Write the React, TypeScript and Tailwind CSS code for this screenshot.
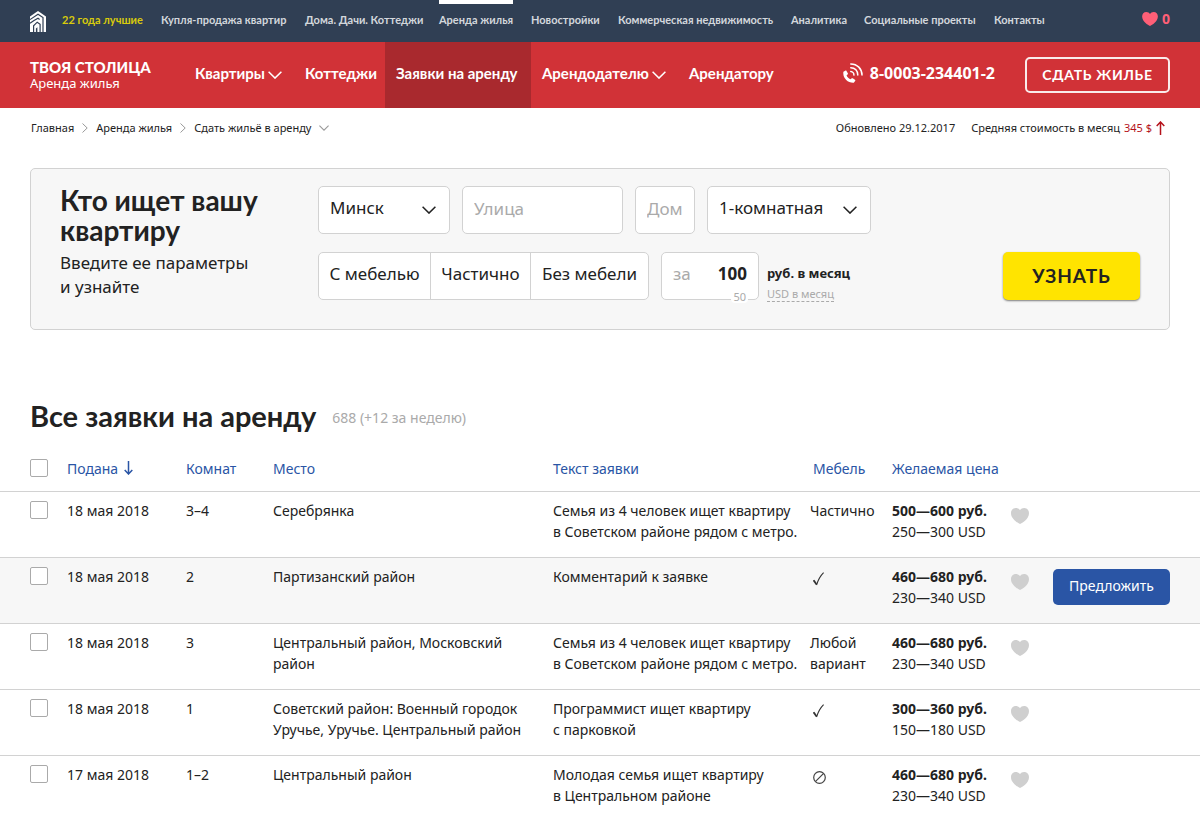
import { useState } from "react";
import type { ReactNode } from "react";

// ==========================================
// Icons
// ==========================================
function LogoIcon() {
  return (
    <svg viewBox="0 0 16 21" className="h-[21px] w-4" aria-hidden="true">
      <path d="M0 5.600 8 0l8 5.600V21H0z" fill="#fff" />
      <g fill="none" stroke="#303f54" strokeWidth="1.200">
        <path d="M0 8.600 8 3.200l5 3.400V21" />
        <path d="M0 12.200l4-2.700 4-2.300 1.600 1.200" />
        <path d="M3.600 21v-6.200L7.200 11.200l2.900 2V21" />
      </g>
      <path d="M5.900 17.500l1.500-1.200V21H5.900z" fill="#303f54" />
    </svg>
  );
}

function HeartIcon({ className }: { className: string }) {
  return (
    <svg viewBox="0 0 18 16" className={className} fill="currentColor" aria-hidden="true">
      <path d="M9 16C6.800 14.900 0 11 0 5.200 0 2.200 2 0 4.800 0 6.700 0 8.200.9 9 2.200 9.800.9 11.300 0 13.200 0 16 0 18 2.200 18 5.200 18 11 11.200 14.900 9 16z" />
    </svg>
  );
}

function Chevron({ className }: { className: string }) {
  return (
    <svg viewBox="0 0 14 8" className={`shrink-0 ${className}`} fill="none" stroke="currentColor" strokeWidth="1.500" aria-hidden="true">
      <path d="M.6.7 7 7.100 13.400.7" />
    </svg>
  );
}

function CrumbArrow() {
  return (
    <svg viewBox="0 0 6 10" className="h-2.5 w-1.5" fill="none" stroke="#999" aria-hidden="true">
      <path d="M.5.5 5.200 5 .5 9.500" />
    </svg>
  );
}

function PhoneIcon() {
  return (
    <svg viewBox="0 0 20 20" className="size-5" fill="none" stroke="#fff" strokeWidth="1.500" strokeLinecap="round" aria-hidden="true">
      <path
        d="M.4 8.800 2.200 7.700c.5-.3 1-.2 1.300.3l1.300 2.200c.3.500.2 1-.3 1.400l-.9.600c.6 2 2.200 3.500 4.200 4.100l.6-.8c.4-.4.900-.5 1.400-.2l2.100 1.400c.5.400.6.900.2 1.400l-1.300 1.600C5 20.200-.6 15 .4 8.800z"
        fill="#fff"
        stroke="none"
      />
      <path d="M7.800 8.600c1.900.1 3.200 1.600 3.100 3.500" />
      <path d="M7.800 4.700c4.200 0 7.100 3.100 7 7.400" />
      <path d="M7.800.9c6.400 0 11.200 4.900 11.200 11.200" />
    </svg>
  );
}

function ArrowIcon({ up, className }: { up?: boolean; className: string }) {
  return (
    <svg viewBox="0 0 9 14" className={className} fill="none" stroke="currentColor" strokeWidth="1.500" aria-hidden="true">
      <path d={up ? "M4.500 14V1M.7 5 4.500 1l3.800 4" : "M4.500 0v13M.7 9l3.800 4 3.800-4"} />
    </svg>
  );
}

function CheckIcon() {
  return (
    <svg viewBox="0 0 11 14" className="mt-1.5 ml-[3px] h-3.5 w-[11px]" fill="none" stroke="#333" role="img" aria-label="Есть">
      <path d="M.6 8.200 3.600 12.600" strokeWidth="1.800" />
      <path d="M3.500 13C5 8.500 7.200 4 10.600.7" strokeWidth="1.100" />
    </svg>
  );
}

function NoneIcon() {
  return (
    <svg viewBox="0 0 13 13" className="mt-[7px] ml-[3px] size-[13px]" fill="none" stroke="#444" strokeWidth="1.200" role="img" aria-label="Нет">
      <circle cx="6.500" cy="6.500" r="5.800" />
      <path d="m2.600 10.400 7.800-7.800" />
    </svg>
  );
}

// ==========================================
// Header
// ==========================================
const topLinks = [
  "22 года лучшие",
  "Купля-продажа квартир",
  "Дома. Дачи. Коттеджи",
  "Аренда жилья",
  "Новостройки",
  "Коммерческая недвижимость",
  "Аналитика",
  "Социальные проекты",
  "Контакты",
];

function TopBar() {
  return (
    <div className="flex h-[42px] items-center bg-[#303f54] px-[30px] text-[#d3d7dc]">
      <a href="#" aria-label="Твоя столица" className="w-8 shrink-0">
        <LogoIcon />
      </a>
      <nav className="grid h-full grid-cols-[99px_144px_134px_92px_87px_173px_73px_130px_auto] font-['Lato',sans-serif] text-[11px] leading-10 font-bold whitespace-nowrap">
        {topLinks.map((label, i) => (
          <a key={label} href="#" className={`justify-self-start ${i === 0 ? "text-[#d9cb0b]" : ""} ${i === 3 ? "border-t-4 border-white leading-8" : ""}`}>
            {label}
          </a>
        ))}
      </nav>
      <a href="#" className="ml-auto flex items-center gap-1 pb-1 text-sm font-bold text-[#ff5f77]">
        <HeartIcon className="h-3.5 w-4" />0
      </a>
    </div>
  );
}

const mainLinks = [
  { label: "Квартиры", more: true },
  { label: "Коттеджи" },
  { label: "Заявки на аренду", active: true },
  { label: "Арендодателю", more: true },
  { label: "Арендатору" },
];

function MainBar() {
  return (
    <div className="flex h-[66px] items-center bg-[#d13237] px-[30px] text-white">
      <a href="#" className="w-[154px] shrink-0">
        <span className="block font-['Lato',sans-serif] text-[15px] leading-4 font-black whitespace-nowrap">ТВОЯ СТОЛИЦА</span>
        <span className="block text-[13px] leading-4">Аренда жилья</span>
      </a>
      <nav className="grid h-full grid-cols-[110px_91px_146px_147px_auto] font-['Lato',sans-serif] text-[15px] font-bold whitespace-nowrap">
        {mainLinks.map((l) => (
          <a key={l.label} href="#" className={`flex items-center gap-[3px] px-[11px] pb-1 ${l.active ? "bg-[#a9292e]" : ""}`}>
            {l.label}
            {l.more && <Chevron className="mt-1 h-2 w-3.5" />}
          </a>
        ))}
      </nav>
      <a href="tel:80003234401" className="ml-auto flex items-center gap-[7px] pb-1 text-base font-bold whitespace-nowrap">
        <PhoneIcon />
        8-0003-234401-2
      </a>
      <button className="ml-[30px] h-9 w-[145px] rounded-[5px] border-2 border-white/90 font-['Lato',sans-serif] text-sm font-bold tracking-wider">СДАТЬ ЖИЛЬЕ</button>
    </div>
  );
}

function Breadcrumbs() {
  return (
    <div className="flex h-10 items-center justify-between px-[31px] text-[11px] whitespace-nowrap">
      <nav className="flex items-center gap-2">
        <a href="#">Главная</a>
        <CrumbArrow />
        <a href="#">Аренда жилья</a>
        <CrumbArrow />
        <a href="#">Сдать жильё в аренду</a>
        <Chevron className="h-1.5 w-2.5 text-[#999]" />
      </nav>
      <p className="flex items-center gap-4">
        <span>Обновлено 29.12.2017</span>
        <span className="flex items-center gap-1 pr-1">
          Средняя стоимость в месяц <span className="text-[#b5121b]">345 $</span>
          <ArrowIcon up className="h-3.5 w-[9px] text-[#b5121b]" />
        </span>
      </p>
    </div>
  );
}

// ==========================================
// Search form
// ==========================================
function SelectBox({ label, className, children }: { label: string; className: string; children: ReactNode }) {
  return (
    <label className={`relative h-12 ${className}`}>
      <select aria-label={label} className="size-full appearance-none rounded-[5px] border border-[#d2d2d2] bg-white px-[11px] pb-1">
        {children}
      </select>
      <Chevron className="pointer-events-none absolute top-5 right-3.5 h-2 w-3.5" />
    </label>
  );
}

function SearchForm() {
  const [furniture, setFurniture] = useState("");
  return (
    <form className="mx-[30px] mt-5 flex h-[162px] rounded-[5px] border border-[#d2d2d2] bg-[#f7f7f7] pt-4 pr-[29px] pl-[29px]" onSubmit={(e) => e.preventDefault()}>
      <div className="w-[258px] shrink-0">
        <h1 className="font-['Lato',sans-serif] text-[28px] leading-[30px] font-bold">
          Кто ищет вашу
          <br />
          квартиру
        </h1>
        <p className="mt-1.5 text-[17px] leading-6">
          Введите ее параметры
          <br />и узнайте
        </p>
      </div>
      <div className="mt-px flex flex-col gap-[18px] text-[17px]">
        <div className="flex gap-3">
          <SelectBox label="Город" className="w-[132px]">
            <option>Минск</option>
          </SelectBox>
          <input aria-label="Улица" placeholder="Улица" className="h-12 w-[161px] rounded-[5px] border border-[#d2d2d2] bg-white px-[11px] pb-1 placeholder:text-[#aaa]" />
          <input aria-label="Дом" placeholder="Дом" className="h-12 w-[60px] rounded-[5px] border border-[#d2d2d2] bg-white px-[11px] pb-1 placeholder:text-[#aaa]" />
          <SelectBox label="Комнат" className="w-[164px]">
            <option>1-комнатная</option>
          </SelectBox>
        </div>
        <div className="flex gap-3">
          <div className="grid h-12 grid-cols-[112px_100px_117px] divide-x divide-[#d2d2d2] rounded-[5px] border border-[#d2d2d2] bg-white whitespace-nowrap">
            {["С мебелью", "Частично", "Без мебели"].map((name) => (
              <label key={name} className="flex cursor-pointer items-center justify-center pb-1 has-checked:bg-[#fff3a0]">
                <input type="radio" name="furniture" className="size-0 appearance-none" checked={furniture === name} onChange={() => setFurniture(name)} />
                {name}
              </label>
            ))}
          </div>
          <div className="flex gap-2">
            <div className="relative flex h-12 w-[98px] items-center justify-between rounded-[5px] border border-[#d2d2d2] bg-white px-[11px] pb-1">
              <label htmlFor="price" className="text-[#aaa]">
                за
              </label>
              <input id="price" defaultValue="100" className="w-12 text-right font-bold" />
              <span className="absolute right-2.5 -bottom-1 rounded bg-white px-0.5 text-[11px] leading-3 text-[#aaa]">50</span>
            </div>
            <div className="pt-3">
              <p className="text-[13px] leading-[18px] font-bold">руб. в месяц</p>
              <button type="button" className="mt-1 block border-b border-dashed border-[#aaa] text-[11px] leading-[15px] text-[#aaa]">
                USD в месяц
              </button>
            </div>
          </div>
        </div>
      </div>
      <button className="mt-[67px] ml-auto h-12 w-[137px] rounded-[5px] bg-[#ffe400] font-['Lato',sans-serif] text-[19px] font-bold tracking-wider shadow-[0_1px_2px_rgba(0,0,0,0.5)]">
        УЗНАТЬ
      </button>
    </form>
  );
}

// ==========================================
// Requests table
// ==========================================
type Request = {
  date: string;
  rooms: string;
  place: string[];
  text: string[];
  furniture: ReactNode;
  price: string;
  usd: string;
  hovered?: boolean;
};

const family = ["Семья из 4 человек ищет квартиру", "в Советском районе рядом с метро."];

const requests: Request[] = [
  { date: "18 мая 2018", rooms: "3–4", place: ["Серебрянка"], text: family, furniture: "Частично", price: "500—600 руб.", usd: "250—300 USD" },
  { date: "18 мая 2018", rooms: "2", place: ["Партизанский район"], text: ["Комментарий к заявке"], furniture: <CheckIcon />, price: "460—680 руб.", usd: "230—340 USD", hovered: true },
  { date: "18 мая 2018", rooms: "3", place: ["Центральный район, Московский", "район"], text: family, furniture: "Любой вариант", price: "460—680 руб.", usd: "230—340 USD" },
  { date: "18 мая 2018", rooms: "1", place: ["Советский район: Военный городок", "Уручье, Уручье. Центральный район"], text: ["Программист ищет квартиру", "с парковкой"], furniture: <CheckIcon />, price: "300—360 руб.", usd: "150—180 USD" },
  { date: "17 мая 2018", rooms: "1–2", place: ["Центральный район"], text: ["Молодая семья ищет квартиру", "в Центральном районе"], furniture: <NoneIcon />, price: "460—680 руб.", usd: "230—340 USD" },
];

function Checkbox({ label }: { label: string }) {
  return <input type="checkbox" aria-label={label} className="block size-[18px] appearance-none rounded-xs border border-[#aaa] bg-white checked:bg-[#2a55a5]" />;
}

function Lines({ items }: { items: string[] }) {
  return (
    <>
      {items.map((line) => (
        <span key={line} className="block whitespace-nowrap">
          {line}
        </span>
      ))}
    </>
  );
}

function RequestsTable() {
  return (
    <table className="w-full table-fixed text-left text-sm leading-[21px]">
      <colgroup>
        <col className="w-[67px]" />
        <col className="w-[119px]" />
        <col className="w-[87px]" />
        <col className="w-[280px]" />
        <col className="w-[257px]" />
        <col className="w-[82px]" />
        <col className="w-[119px]" />
        <col />
      </colgroup>
      <thead className="text-[#2a55a5]">
        <tr className="h-[45px] border-b border-[#d2d2d2]">
          <th className="pl-[30px]">
            <Checkbox label="Выбрать все" />
          </th>
          <th className="font-normal">
            <a href="#" className="flex items-center gap-1.5">
              Подана <ArrowIcon className="h-3.5 w-[9px]" />
            </a>
          </th>
          <th className="font-normal">
            <a href="#">Комнат</a>
          </th>
          <th className="font-normal">
            <a href="#">Место</a>
          </th>
          <th className="font-normal">
            <a href="#">Текст заявки</a>
          </th>
          <th className="pl-[3px] font-normal">
            <a href="#">Мебель</a>
          </th>
          <th className="font-normal">
            <a href="#">Желаемая цена</a>
          </th>
          <th aria-label="Действия" />
        </tr>
      </thead>
      <tbody>
        {requests.map((r, i) => (
          <tr key={i} className={`h-[66px] border-b border-[#d2d2d2] align-top last:border-b-0 ${r.hovered ? "bg-[#f7f7f7]" : ""}`}>
            <td className="pt-[9px] pl-[30px]">
              <Checkbox label={`Выбрать заявку ${i + 1}`} />
            </td>
            <td className="pt-2">{r.date}</td>
            <td className="pt-2">{r.rooms}</td>
            <td className="pt-2">
              <Lines items={r.place} />
            </td>
            <td className="pt-2">
              <Lines items={r.text} />
            </td>
            <td className="pt-2 pr-4">{r.furniture}</td>
            <td className="pt-2 whitespace-nowrap">
              <b className="block">{r.price}</b>
              {r.usd}
            </td>
            <td className="pt-[11px] pr-[30px]">
              <div className="flex items-start justify-between">
                <button aria-label="В избранное" className="mt-[5px] text-[#cfcfcf]">
                  <HeartIcon className="block h-4 w-[18px]" />
                </button>
                {r.hovered && <button className="h-9 w-[117px] rounded-[5px] bg-[#2a55a5] pb-0.5 text-white">Предложить</button>}
              </div>
            </td>
          </tr>
        ))}
      </tbody>
    </table>
  );
}

export default function App() {
  return (
    <div className="bg-white font-['Noto_Sans',sans-serif] text-[#222]">
      <header>
        <TopBar />
        <MainBar />
        <Breadcrumbs />
      </header>
      <main>
        <SearchForm />
        <div className="flex items-center gap-4 px-[30px] pt-[65px] pb-[9px]">
          <h2 className="font-['Lato',sans-serif] text-[29px] leading-[42px] font-bold">Все заявки на аренду</h2>
          <span className="pt-1 text-sm text-[#aaa]">688 (+12 за неделю)</span>
        </div>
        <RequestsTable />
      </main>
    </div>
  );
}
